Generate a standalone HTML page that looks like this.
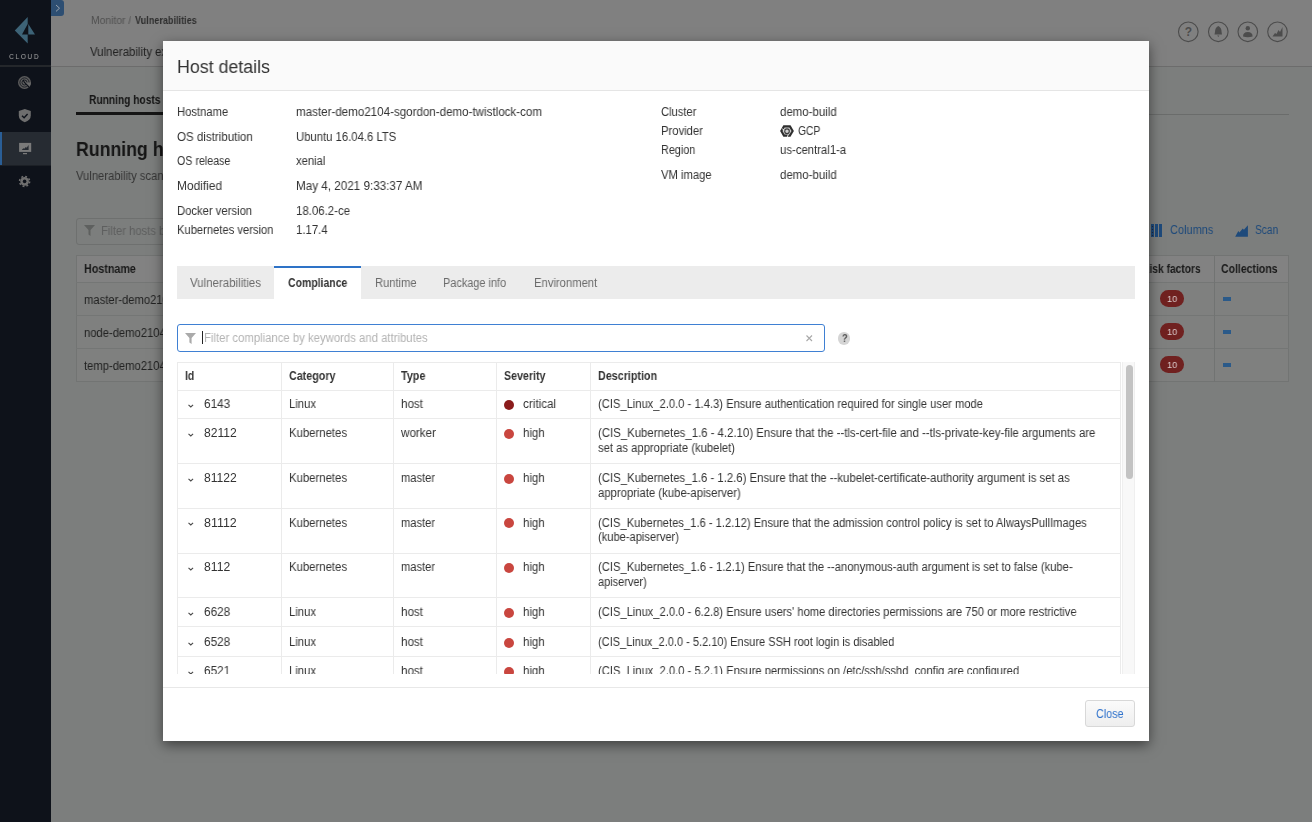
<!DOCTYPE html>
<html><head><meta charset="utf-8"><title>Host details</title>
<style>
html,body{margin:0;padding:0;width:1312px;height:822px;overflow:hidden;background:#7c7e7d;font-family:"Liberation Sans",sans-serif;}
.t{position:absolute;white-space:nowrap;line-height:1;transform-origin:0 0;will-change:transform;}
.r{position:absolute;box-sizing:border-box;}
svg{position:absolute;overflow:visible;}
</style></head><body>
<div class="r" style="left:51px;top:0px;width:1261px;height:66px;background:#808080;"></div>
<div class="r" style="left:51px;top:66px;width:1261px;height:1px;background:#6c6c6c;"></div>
<div class="r" style="left:0px;top:0px;width:51px;height:822px;background:#0e121a;"></div>
<div class="r" style="left:0px;top:65px;width:51px;height:2px;background:#24272b;"></div>
<div class="r" style="left:0px;top:131.5px;width:51px;height:1px;background:#1c2026;"></div>
<div class="r" style="left:0px;top:165px;width:51px;height:1px;background:#1c2026;"></div>
<div class="r" style="left:0px;top:132px;width:51px;height:33px;background:#262b32;"></div>
<div class="r" style="left:0px;top:132px;width:1.5px;height:33px;background:#2a5e96;"></div>
<div class="r" style="left:51px;top:0px;width:13px;height:16px;background:#2d4e72;border-radius:0 3px 3px 0;"></div>
<svg style="left:51px;top:0" width="13" height="16"><path d="M5 5 L8.5 8.2 L5 11.4" fill="none" stroke="#9aa3ad" stroke-width="1"/></svg>
<svg style="left:0;top:0" width="51" height="66"><path d="M27.7 17 L14.8 30.4 L27.7 43.5 L27.7 34.6 L22 34.6 L27.7 24 Z M28.3 24 L35 34.6 L28.3 34.6 Z" fill="#3d6377"/></svg>
<div class="t" style="left:9px;top:53px;font-size:8px;color:#a8a8a8;letter-spacing:1.7px;transform:scaleX(0.8544);">CLOUD</div>
<svg style="left:0;top:0" width="51" height="200"><circle cx="24.5" cy="82.5" r="6.5" fill="#5c5c5c"/><circle cx="24.5" cy="82.5" r="4.6" fill="none" stroke="#0e121a" stroke-width="0.8"/><circle cx="24.5" cy="82.5" r="2.5" fill="none" stroke="#0e121a" stroke-width="0.8"/><path d="M24.5 82.5 L31 82.5 A6.5 6.5 0 0 1 29.1 87.1 Z" fill="#6a6a6a"/><path d="M23 79.8 L24.5 82.5 L29 87" fill="none" stroke="#0e121a" stroke-width="1.1"/><path d="M24.8 109 L30.8 111 L30.8 115.5 Q30.8 120 24.8 122.2 Q18.8 120 18.8 115.5 L18.8 111 Z" fill="#6e6e6e"/><path d="M22 115.8 L24.1 117.8 L27.6 114" fill="none" stroke="#0e121a" stroke-width="1.4"/><rect x="19.1" y="142.9" width="12.1" height="9" fill="#7a7a7a"/><rect x="23" y="153" width="4" height="1.2" fill="#7a7a7a"/><path d="M21.8 150 L23.3 148.2 L24.3 148.8 L25.8 147 L26.7 147.7 L28.6 144.9 L28.6 150 Z" fill="#262b32"/><circle cx="24.6" cy="181.4" r="4.3" fill="#6e6e6e"/><circle cx="24.6" cy="181.4" r="5" fill="none" stroke="#6e6e6e" stroke-width="1.6" stroke-dasharray="1.9 2.02"/><circle cx="24.6" cy="181.4" r="1.8" fill="#0e121a"/></svg>
<div class="t" style="left:90.8px;top:15px;font-size:10.5px;color:#505050;transform:scaleX(0.9839);">Monitor /</div>
<div class="t" style="left:135px;top:15px;font-size:10.5px;color:#2e2e2e;font-weight:700;transform:scaleX(0.8657);">Vulnerabilities</div>
<div class="t" style="left:90px;top:46px;font-size:12.5px;color:#222;transform:scaleX(0.9160);">Vulnerability explorer</div>
<svg style="left:1170px;top:15px" width="130" height="35"><circle cx="18.299999999999955" cy="16.8" r="9.8" fill="none" stroke="#4c4c4c" stroke-width="1.1"/><circle cx="48.299999999999955" cy="16.8" r="9.8" fill="none" stroke="#4c4c4c" stroke-width="1.1"/><circle cx="77.79999999999995" cy="16.8" r="9.8" fill="none" stroke="#4c4c4c" stroke-width="1.1"/><circle cx="107.5" cy="16.8" r="9.8" fill="none" stroke="#4c4c4c" stroke-width="1.1"/><text x="18.3" y="21.3" font-size="12" font-weight="700" text-anchor="middle" fill="#4c4c4c" font-family="Liberation Sans">?</text><path d="M48.3 11 Q45 12.5 45 17 L44.5 19.5 L52 19.5 L51.6 17 Q51.6 12.5 48.3 11 Z M47.2 20.5 L49.4 20.5 L48.3 22 Z" fill="#4c4c4c"/><circle cx="77.8" cy="13.2" r="2.2" fill="#4c4c4c"/><path d="M73 21.5 Q73 17 77.8 17 Q82.6 17 82.6 21.5 Q77.8 23 73 21.5 Z" fill="#4c4c4c"/><path d="M102.5 21.5 L105 18 L106.5 19 L108.5 15 L110 17 L112.5 12 L112.5 21.5 Z" fill="#4c4c4c"/></svg>
<div class="t" style="left:89.3px;top:94px;font-size:12px;color:#161616;font-weight:700;transform:scaleX(0.8512);">Running hosts</div>
<div class="r" style="left:76px;top:114px;width:1213px;height:1px;background:#6a6c6b;"></div>
<div class="r" style="left:76px;top:112px;width:90px;height:3px;background:#151515;"></div>
<div class="t" style="left:75.6px;top:139px;font-size:20px;color:#161616;font-weight:700;transform:scaleX(0.8850);">Running hosts</div>
<div class="t" style="left:75.6px;top:170px;font-size:12px;color:#363636;transform:scaleX(0.9350);">Vulnerability scan results for running hosts</div>
<div class="r" style="left:76px;top:217.5px;width:700px;height:27px;border:1px solid #6e706f;border-radius:3px;"></div>
<svg style="left:84px;top:225px" width="11" height="11"><path d="M0 0 L11 0 L6.5 5 L6.5 11 L4.5 9.5 L4.5 5 Z" fill="#5e605f"/></svg>
<div class="t" style="left:101px;top:225px;font-size:12px;color:#5e5f5f;transform:scaleX(0.9350);">Filter hosts by keywords</div>
<svg style="left:1151px;top:224px" width="12" height="13"><rect x="0" y="0" width="3" height="13" fill="#1e4a7b"/><rect x="4" y="0" width="3" height="13" fill="#1e4a7b"/><rect x="8" y="0" width="3" height="13" fill="#1e4a7b"/><circle cx="1.5" cy="2.5" r="0.6" fill="#223"/><circle cx="1.5" cy="5.5" r="0.6" fill="#223"/><circle cx="1.5" cy="8.5" r="0.6" fill="#223"/><circle cx="1.5" cy="11.5" r="0.6" fill="#223"/></svg>
<div class="t" style="left:1169.5px;top:224px;font-size:12.5px;color:#1e4a7b;transform:scaleX(0.8798);">Columns</div>
<svg style="left:1235px;top:225px" width="13" height="12"><path d="M0.2 11.8 L3.3 6 L4.4 7.4 L7.8 3.4 L8.9 4.8 L12.9 0.2 L12.9 11.8 Z" fill="#1e4a7b"/></svg>
<div class="t" style="left:1254.5px;top:224px;font-size:12.5px;color:#1e4a7b;transform:scaleX(0.8175);">Scan</div>
<div class="r" style="left:76px;top:255px;width:1213px;height:127px;border:1px solid #727473;background:#7f807f;"></div>
<div class="r" style="left:77px;top:256px;width:1211px;height:26px;background:#828282;"></div>
<div class="r" style="left:76px;top:282px;width:1213px;height:1px;background:#747675;"></div>
<div class="r" style="left:76px;top:315px;width:1213px;height:1px;background:#747675;"></div>
<div class="r" style="left:76px;top:348px;width:1213px;height:1px;background:#747675;"></div>
<div class="r" style="left:1214px;top:255.5px;width:1px;height:126px;background:#717372;"></div>
<div class="t" style="left:83.6px;top:263px;font-size:12px;color:#1a1a1a;font-weight:700;transform:scaleX(0.8929);">Hostname</div>
<div class="t" style="left:83.6px;top:294px;font-size:12px;color:#222;transform:scaleX(0.9350);">master-demo2104-sgordon</div>
<div class="t" style="left:83.6px;top:327px;font-size:12px;color:#222;transform:scaleX(0.9350);">node-demo2104-sgordon</div>
<div class="t" style="left:83.6px;top:360px;font-size:12px;color:#222;transform:scaleX(0.9350);">temp-demo2104-sgordon</div>
<div class="t" style="left:1141.5px;top:263px;font-size:12px;color:#1a1a1a;font-weight:700;transform:scaleX(0.8544);">Risk factors</div>
<div class="t" style="left:1221.4px;top:263px;font-size:12px;color:#1a1a1a;font-weight:700;transform:scaleX(0.8734);">Collections</div>
<div class="r" style="left:1160.2px;top:290.3px;width:23.8px;height:16.6px;background:#702120;border-radius:8.3px;"></div>
<div class="t" style="left:1167px;top:294px;font-size:9.5px;color:#dccccc;transform:scaleX(0.9643);">10</div>
<div class="r" style="left:1223px;top:297.3px;width:8.3px;height:4px;background:#2b5a89;"></div>
<div class="r" style="left:1160.2px;top:323.2px;width:23.8px;height:16.6px;background:#702120;border-radius:8.3px;"></div>
<div class="t" style="left:1167px;top:327px;font-size:9.5px;color:#dccccc;transform:scaleX(0.9643);">10</div>
<div class="r" style="left:1223px;top:330.2px;width:8.3px;height:4px;background:#2b5a89;"></div>
<div class="r" style="left:1160.2px;top:356.0px;width:23.8px;height:16.6px;background:#702120;border-radius:8.3px;"></div>
<div class="t" style="left:1167px;top:360px;font-size:9.5px;color:#dccccc;transform:scaleX(0.9643);">10</div>
<div class="r" style="left:1223px;top:363.0px;width:8.3px;height:4px;background:#2b5a89;"></div>
<div class="r" style="left:163px;top:41px;width:986px;height:700px;background:#fff;box-shadow:0 4px 12px rgba(0,0,0,.5);"></div>
<div class="r" style="left:163px;top:41px;width:986px;height:49px;background:#fafafa;"></div>
<div class="r" style="left:163px;top:90px;width:986px;height:1px;background:#e5e5e5;"></div>
<div class="t" style="left:176.6px;top:58px;font-size:18px;color:#333;transform:scaleX(0.9889);">Host details</div>
<div class="t" style="left:177.2px;top:106px;font-size:12px;color:#333;transform:scaleX(0.9360);">Hostname</div>
<div class="t" style="left:295.5px;top:106px;font-size:12px;color:#333;transform:scaleX(0.9656);">master-demo2104-sgordon-demo-twistlock-com</div>
<div class="t" style="left:177.2px;top:131px;font-size:12px;color:#333;transform:scaleX(0.9631);">OS distribution</div>
<div class="t" style="left:295.5px;top:131px;font-size:12px;color:#333;transform:scaleX(0.9406);">Ubuntu 16.04.6 LTS</div>
<div class="t" style="left:177.2px;top:155px;font-size:12px;color:#333;transform:scaleX(0.8895);">OS release</div>
<div class="t" style="left:295.5px;top:155px;font-size:12px;color:#333;transform:scaleX(0.9343);">xenial</div>
<div class="t" style="left:177.2px;top:180px;font-size:12px;color:#333;transform:scaleX(0.9921);">Modified</div>
<div class="t" style="left:295.5px;top:180px;font-size:12px;color:#333;transform:scaleX(0.9724);">May 4, 2021 9:33:37 AM</div>
<div class="t" style="left:177.2px;top:205px;font-size:12px;color:#333;transform:scaleX(0.9384);">Docker version</div>
<div class="t" style="left:295.5px;top:205px;font-size:12px;color:#333;transform:scaleX(0.9538);">18.06.2-ce</div>
<div class="t" style="left:177.2px;top:224px;font-size:12px;color:#333;transform:scaleX(0.9322);">Kubernetes version</div>
<div class="t" style="left:295.5px;top:224px;font-size:12px;color:#333;transform:scaleX(0.9468);">1.17.4</div>
<div class="t" style="left:661px;top:106px;font-size:12px;color:#333;transform:scaleX(0.9312);">Cluster</div>
<div class="t" style="left:779.7px;top:106px;font-size:12px;color:#333;transform:scaleX(0.9549);">demo-build</div>
<div class="t" style="left:661px;top:125px;font-size:12px;color:#333;transform:scaleX(0.9376);">Provider</div>
<div class="t" style="left:661px;top:144px;font-size:12px;color:#333;transform:scaleX(0.9019);">Region</div>
<div class="t" style="left:779.7px;top:144px;font-size:12px;color:#333;transform:scaleX(0.9453);">us-central1-a</div>
<div class="t" style="left:661px;top:169px;font-size:12px;color:#333;transform:scaleX(0.9365);">VM image</div>
<div class="t" style="left:779.7px;top:169px;font-size:12px;color:#333;transform:scaleX(0.9549);">demo-build</div>
<svg style="left:780px;top:125px" width="14" height="12"><path d="M3.4 0.3 L10.5 0.3 L13.9 6 L10.5 11.8 L3.4 11.8 L0.1 6 Z" fill="#2e2e2e"/><path d="M4.6 2.6 L9.3 2.6 L11.5 6 L9.3 9.5 L4.6 9.5 L2.5 6 Z" fill="#d0d0d0"/><circle cx="7" cy="6.2" r="2.3" fill="none" stroke="#3a3a3a" stroke-width="1.1"/><path d="M7.3 11.9 L8.4 9.3 M2.2 3.8 L4.2 5.2" stroke="#fff" stroke-width="0.9"/></svg>
<div class="t" style="left:797.8px;top:125px;font-size:12px;color:#333;transform:scaleX(0.8572);">GCP</div>
<div class="r" style="left:176.5px;top:265.7px;width:958.5px;height:33px;background:#ececec;"></div>
<div class="r" style="left:274px;top:265.7px;width:87px;height:33px;background:#fff;"></div>
<div class="r" style="left:274px;top:265.7px;width:87px;height:2px;background:#2e73c7;"></div>
<div class="t" style="left:190.3px;top:277px;font-size:12px;color:#6b6b6b;transform:scaleX(0.9560);">Vulnerabilities</div>
<div class="t" style="left:288px;top:277px;font-size:12px;color:#333;font-weight:700;transform:scaleX(0.8719);">Compliance</div>
<div class="t" style="left:374.5px;top:277px;font-size:12px;color:#6b6b6b;transform:scaleX(0.9309);">Runtime</div>
<div class="t" style="left:443.2px;top:277px;font-size:12px;color:#6b6b6b;transform:scaleX(0.9093);">Package info</div>
<div class="t" style="left:533.6px;top:277px;font-size:12px;color:#6b6b6b;transform:scaleX(0.9380);">Environment</div>
<div class="r" style="left:177px;top:324px;width:648px;height:28px;border:1px solid #3f80d3;border-radius:3px;"></div>
<svg style="left:184.6px;top:332.7px" width="11" height="11"><path d="M0 0 L11 0 L6.6 5 L6.6 11 L4.4 9.5 L4.4 5 Z" fill="#aaa"/></svg>
<div class="r" style="left:202px;top:331px;width:1px;height:13.3px;background:#222;"></div>
<div class="t" style="left:203.5px;top:332px;font-size:12px;color:#b3b3b3;transform:scaleX(0.9448);">Filter compliance by keywords and attributes</div>
<svg style="left:805.7px;top:335.2px" width="7" height="7"><path d="M0.5 0.5 L6 6 M6 0.5 L0.5 6" stroke="#a8a8a8" stroke-width="1.1"/></svg>
<div class="r" style="left:837.8px;top:332px;width:12.5px;height:12.5px;background:#d5d5d5;border-radius:50%;"></div>
<div class="t" style="left:841.5px;top:333px;font-size:11.5px;color:#555;font-weight:700;transform:scaleX(0.7964);">?</div>
<div style="position:absolute;left:177px;top:362px;width:958px;height:312px;overflow:hidden;">
<div class="r" style="left:0px;top:0px;width:944px;height:400px;border-left:1px solid #ebebeb;border-right:1px solid #ebebeb;border-top:1px solid #ebebeb;"></div>
<div class="r" style="left:0px;top:27.5px;width:944px;height:1px;background:#ebebeb;"></div>
<div class="r" style="left:0px;top:56.3px;width:944px;height:1px;background:#ebebeb;"></div>
<div class="r" style="left:0px;top:101.2px;width:944px;height:1px;background:#ebebeb;"></div>
<div class="r" style="left:0px;top:146.2px;width:944px;height:1px;background:#ebebeb;"></div>
<div class="r" style="left:0px;top:190.8px;width:944px;height:1px;background:#ebebeb;"></div>
<div class="r" style="left:0px;top:235.3px;width:944px;height:1px;background:#ebebeb;"></div>
<div class="r" style="left:0px;top:264.4px;width:944px;height:1px;background:#ebebeb;"></div>
<div class="r" style="left:0px;top:293.9px;width:944px;height:1px;background:#ebebeb;"></div>
<div class="r" style="left:0px;top:338px;width:944px;height:1px;background:#ebebeb;"></div>
<div class="r" style="left:104px;top:0px;width:1px;height:400px;background:#ebebeb;"></div>
<div class="r" style="left:216px;top:0px;width:1px;height:400px;background:#ebebeb;"></div>
<div class="r" style="left:319px;top:0px;width:1px;height:400px;background:#ebebeb;"></div>
<div class="r" style="left:413px;top:0px;width:1px;height:400px;background:#ebebeb;"></div>
<div class="t" style="left:7.6px;top:8px;font-size:12px;color:#333;font-weight:700;transform:scaleX(0.8621);">Id</div>
<div class="t" style="left:111.6px;top:8px;font-size:12px;color:#333;font-weight:700;transform:scaleX(0.8940);">Category</div>
<div class="t" style="left:223.8px;top:8px;font-size:12px;color:#333;font-weight:700;transform:scaleX(0.8995);">Type</div>
<div class="t" style="left:327.2px;top:8px;font-size:12px;color:#333;font-weight:700;transform:scaleX(0.8886);">Severity</div>
<div class="t" style="left:421.3px;top:8px;font-size:12px;color:#333;font-weight:700;transform:scaleX(0.8952);">Description</div>
<svg style="left:10.6px;top:41.8px" width="6" height="4"><path d="M0.5 0.8 L2.8 3 L5.1 0.8" fill="none" stroke="#4a4a4a" stroke-width="1.1"/></svg>
<div class="t" style="left:26.8px;top:36px;font-size:12px;color:#333;transform:scaleX(0.9812);">6143</div>
<div class="t" style="left:111.6px;top:36px;font-size:12px;color:#333;transform:scaleX(0.9412);">Linux</div>
<div class="t" style="left:223.8px;top:36px;font-size:12px;color:#333;transform:scaleX(0.9697);">host</div>
<div class="r" style="left:327px;top:37.8px;width:10px;height:10px;background:#8b1c1c;border-radius:50%;"></div>
<div class="t" style="left:346.2px;top:36px;font-size:12px;color:#333;transform:scaleX(0.9731);">critical</div>
<div class="t" style="left:421.2px;top:36px;font-size:12px;color:#333;transform:scaleX(0.9322);">(CIS_Linux_2.0.0 - 1.4.3) Ensure authentication required for single user mode</div>
<svg style="left:10.6px;top:70.8px" width="6" height="4"><path d="M0.5 0.8 L2.8 3 L5.1 0.8" fill="none" stroke="#4a4a4a" stroke-width="1.1"/></svg>
<div class="t" style="left:26.8px;top:65px;font-size:12px;color:#333;transform:scaleX(1.0097);">82112</div>
<div class="t" style="left:111.6px;top:65px;font-size:12px;color:#333;transform:scaleX(0.9448);">Kubernetes</div>
<div class="t" style="left:223.8px;top:65px;font-size:12px;color:#333;transform:scaleX(0.9718);">worker</div>
<div class="r" style="left:327px;top:66.8px;width:10px;height:10px;background:#c9463f;border-radius:50%;"></div>
<div class="t" style="left:346.2px;top:65px;font-size:12px;color:#333;transform:scaleX(0.9565);">high</div>
<div class="t" style="left:421.2px;top:65px;font-size:12px;color:#333;transform:scaleX(0.9488);">(CIS_Kubernetes_1.6 - 4.2.10) Ensure that the --tls-cert-file and --tls-private-key-file arguments are</div>
<div class="t" style="left:421.2px;top:80px;font-size:12px;color:#333;transform:scaleX(0.9378);">set as appropriate (kubelet)</div>
<svg style="left:10.6px;top:115.8px" width="6" height="4"><path d="M0.5 0.8 L2.8 3 L5.1 0.8" fill="none" stroke="#4a4a4a" stroke-width="1.1"/></svg>
<div class="t" style="left:26.8px;top:110px;font-size:12px;color:#333;transform:scaleX(1.0097);">81122</div>
<div class="t" style="left:111.6px;top:110px;font-size:12px;color:#333;transform:scaleX(0.9448);">Kubernetes</div>
<div class="t" style="left:223.8px;top:110px;font-size:12px;color:#333;transform:scaleX(0.9267);">master</div>
<div class="r" style="left:327px;top:111.8px;width:10px;height:10px;background:#c9463f;border-radius:50%;"></div>
<div class="t" style="left:346.2px;top:110px;font-size:12px;color:#333;transform:scaleX(0.9565);">high</div>
<div class="t" style="left:421.2px;top:110px;font-size:12px;color:#333;transform:scaleX(0.9469);">(CIS_Kubernetes_1.6 - 1.2.6) Ensure that the --kubelet-certificate-authority argument is set as</div>
<div class="t" style="left:421.2px;top:125px;font-size:12px;color:#333;transform:scaleX(0.9425);">appropriate (kube-apiserver)</div>
<svg style="left:10.6px;top:160.4px" width="6" height="4"><path d="M0.5 0.8 L2.8 3 L5.1 0.8" fill="none" stroke="#4a4a4a" stroke-width="1.1"/></svg>
<div class="t" style="left:26.8px;top:155px;font-size:12px;color:#333;transform:scaleX(1.0382);">81112</div>
<div class="t" style="left:111.6px;top:155px;font-size:12px;color:#333;transform:scaleX(0.9448);">Kubernetes</div>
<div class="t" style="left:223.8px;top:155px;font-size:12px;color:#333;transform:scaleX(0.9267);">master</div>
<div class="r" style="left:327px;top:156.4px;width:10px;height:10px;background:#c9463f;border-radius:50%;"></div>
<div class="t" style="left:346.2px;top:155px;font-size:12px;color:#333;transform:scaleX(0.9565);">high</div>
<div class="t" style="left:421.2px;top:155px;font-size:12px;color:#333;transform:scaleX(0.9335);">(CIS_Kubernetes_1.6 - 1.2.12) Ensure that the admission control policy is set to AlwaysPullImages</div>
<div class="t" style="left:421.2px;top:169px;font-size:12px;color:#333;transform:scaleX(0.9270);">(kube-apiserver)</div>
<svg style="left:10.6px;top:204.8px" width="6" height="4"><path d="M0.5 0.8 L2.8 3 L5.1 0.8" fill="none" stroke="#4a4a4a" stroke-width="1.1"/></svg>
<div class="t" style="left:26.8px;top:199px;font-size:12px;color:#333;transform:scaleX(1.0150);">8112</div>
<div class="t" style="left:111.6px;top:199px;font-size:12px;color:#333;transform:scaleX(0.9448);">Kubernetes</div>
<div class="t" style="left:223.8px;top:199px;font-size:12px;color:#333;transform:scaleX(0.9267);">master</div>
<div class="r" style="left:327px;top:200.8px;width:10px;height:10px;background:#c9463f;border-radius:50%;"></div>
<div class="t" style="left:346.2px;top:199px;font-size:12px;color:#333;transform:scaleX(0.9565);">high</div>
<div class="t" style="left:421.2px;top:199px;font-size:12px;color:#333;transform:scaleX(0.9362);">(CIS_Kubernetes_1.6 - 1.2.1) Ensure that the --anonymous-auth argument is set to false (kube-</div>
<div class="t" style="left:421.2px;top:214px;font-size:12px;color:#333;transform:scaleX(0.9146);">apiserver)</div>
<svg style="left:10.6px;top:249.8px" width="6" height="4"><path d="M0.5 0.8 L2.8 3 L5.1 0.8" fill="none" stroke="#4a4a4a" stroke-width="1.1"/></svg>
<div class="t" style="left:26.8px;top:244px;font-size:12px;color:#333;transform:scaleX(0.9812);">6628</div>
<div class="t" style="left:111.6px;top:244px;font-size:12px;color:#333;transform:scaleX(0.9412);">Linux</div>
<div class="t" style="left:223.8px;top:244px;font-size:12px;color:#333;transform:scaleX(0.9697);">host</div>
<div class="r" style="left:327px;top:245.8px;width:10px;height:10px;background:#c9463f;border-radius:50%;"></div>
<div class="t" style="left:346.2px;top:244px;font-size:12px;color:#333;transform:scaleX(0.9565);">high</div>
<div class="t" style="left:421.2px;top:244px;font-size:12px;color:#333;transform:scaleX(0.9326);">(CIS_Linux_2.0.0 - 6.2.8) Ensure users' home directories permissions are 750 or more restrictive</div>
<svg style="left:10.6px;top:279.8px" width="6" height="4"><path d="M0.5 0.8 L2.8 3 L5.1 0.8" fill="none" stroke="#4a4a4a" stroke-width="1.1"/></svg>
<div class="t" style="left:26.8px;top:274px;font-size:12px;color:#333;transform:scaleX(0.9812);">6528</div>
<div class="t" style="left:111.6px;top:274px;font-size:12px;color:#333;transform:scaleX(0.9412);">Linux</div>
<div class="t" style="left:223.8px;top:274px;font-size:12px;color:#333;transform:scaleX(0.9697);">host</div>
<div class="r" style="left:327px;top:275.8px;width:10px;height:10px;background:#c9463f;border-radius:50%;"></div>
<div class="t" style="left:346.2px;top:274px;font-size:12px;color:#333;transform:scaleX(0.9565);">high</div>
<div class="t" style="left:421.2px;top:274px;font-size:12px;color:#333;transform:scaleX(0.9177);">(CIS_Linux_2.0.0 - 5.2.10) Ensure SSH root login is disabled</div>
<svg style="left:10.6px;top:308.8px" width="6" height="4"><path d="M0.5 0.8 L2.8 3 L5.1 0.8" fill="none" stroke="#4a4a4a" stroke-width="1.1"/></svg>
<div class="t" style="left:26.8px;top:303px;font-size:12px;color:#333;transform:scaleX(0.9812);">6521</div>
<div class="t" style="left:111.6px;top:303px;font-size:12px;color:#333;transform:scaleX(0.9412);">Linux</div>
<div class="t" style="left:223.8px;top:303px;font-size:12px;color:#333;transform:scaleX(0.9697);">host</div>
<div class="r" style="left:327px;top:304.8px;width:10px;height:10px;background:#c9463f;border-radius:50%;"></div>
<div class="t" style="left:346.2px;top:303px;font-size:12px;color:#333;transform:scaleX(0.9565);">high</div>
<div class="t" style="left:421.2px;top:303px;font-size:12px;color:#333;transform:scaleX(0.9325);">(CIS_Linux_2.0.0 - 5.2.1) Ensure permissions on /etc/ssh/sshd_config are configured</div>
<div class="r" style="left:945px;top:0px;width:13px;height:312px;background:#f8f8f8;border-left:1px solid #efefef;border-right:1px solid #efefef;"></div>
<div class="r" style="left:948.6px;top:3px;width:7px;height:114px;background:#c3c3c3;border-radius:3.5px;"></div>
</div>
<div class="r" style="left:163px;top:687px;width:986px;height:1px;background:#e8e8e8;"></div>
<div class="r" style="left:1085px;top:700px;width:50px;height:27px;border:1px solid #d8d8d8;border-radius:3px;background:linear-gradient(#fbfbfb,#eeeeee);"></div>
<div class="t" style="left:1096.3px;top:708px;font-size:12px;color:#2f72cc;transform:scaleX(0.8994);">Close</div>
</body></html>
